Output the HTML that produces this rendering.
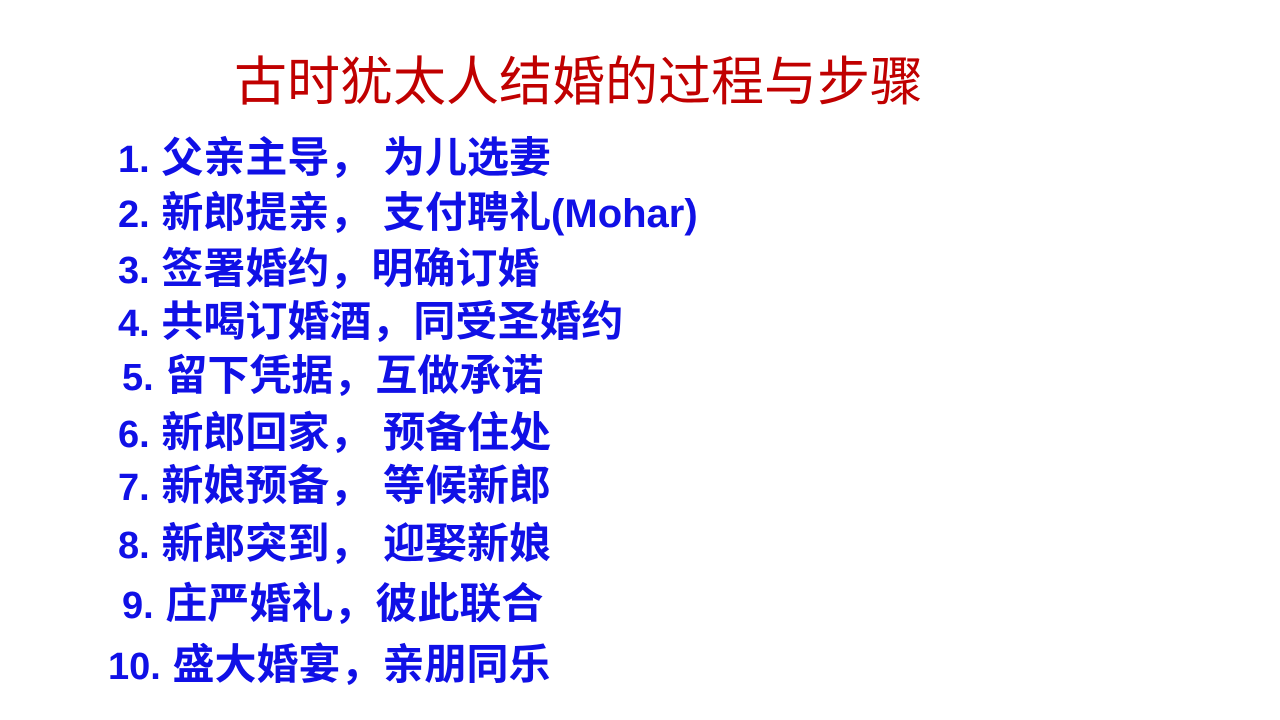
<!DOCTYPE html>
<html><head><meta charset="utf-8"><style>
body{margin:0;width:1280px;height:720px;background:#fff;position:relative;overflow:hidden;font-family:"Liberation Sans","Noto Sans CJK SC",sans-serif;}
.t{position:absolute;left:234px;top:54px;font-size:53px;line-height:58px;color:#C00000;white-space:nowrap;}
.i{position:absolute;font-size:42px;line-height:44px;color:#1010E6;font-weight:bold;white-space:nowrap;}
.n{font-size:38px;}
.m{font-size:40px;}
</style></head><body>
<div class="t">古时犹太人结婚的过程与步骤</div>
<div class="i" style="left:118px;top:136px"><span class="n">1.</span> 父亲主导， 为儿选妻</div>
<div class="i" style="left:118px;top:191px"><span class="n">2.</span> 新郎提亲， 支付聘礼<span class="m">(Mohar)</span></div>
<div class="i" style="left:118px;top:247px"><span class="n">3.</span> 签署婚约，明确订婚</div>
<div class="i" style="left:118px;top:300px"><span class="n">4.</span> 共喝订婚酒，同受圣婚约</div>
<div class="i" style="left:122px;top:354px"><span class="n">5.</span> 留下凭据，互做承诺</div>
<div class="i" style="left:118px;top:411px"><span class="n">6.</span> 新郎回家， 预备住处</div>
<div class="i" style="left:118px;top:464px"><span class="n">7.</span> 新娘预备， 等候新郎</div>
<div class="i" style="left:118px;top:522px"><span class="n">8.</span> 新郎突到， 迎娶新娘</div>
<div class="i" style="left:122px;top:582px"><span class="n">9.</span> 庄严婚礼，彼此联合</div>
<div class="i" style="left:108px;top:643px"><span class="n">10.</span> 盛大婚宴，亲朋同乐</div>
</body></html>
